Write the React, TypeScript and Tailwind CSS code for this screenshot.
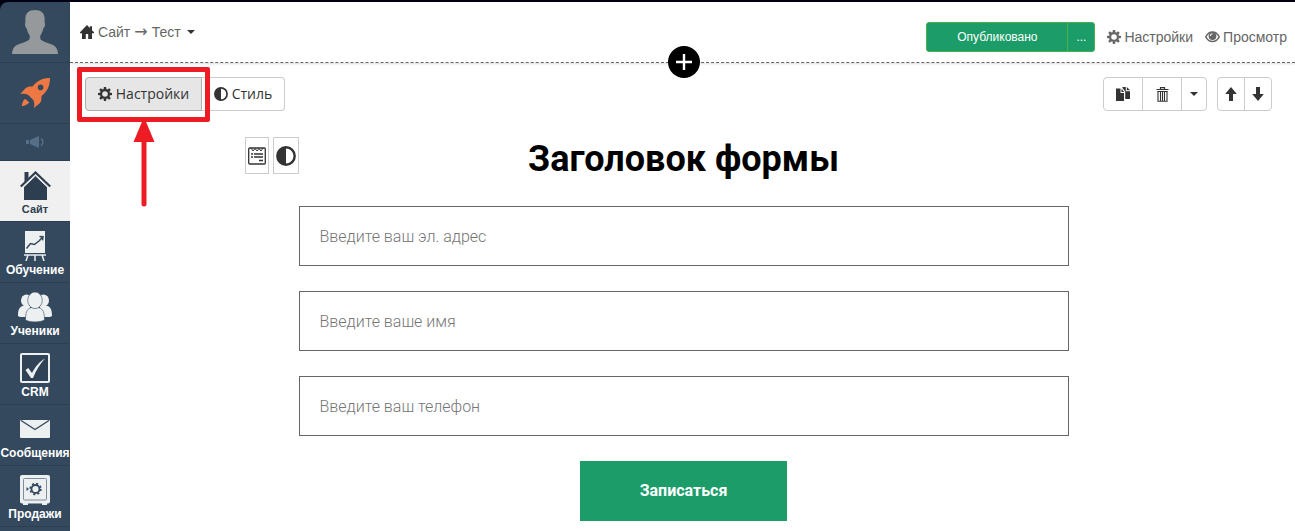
import type { ReactNode } from "react";
import clsx from "clsx";

interface NavItem {
  label: string;
  icon: ReactNode;
  active?: boolean;
}

function CogIcon() {
  return (
    <svg width="14" height="14" viewBox="0 0 14 14" fill="currentColor" aria-hidden="true">
      <circle cx="7" cy="7" r="3.9" fill="none" stroke="currentColor" strokeWidth="2.2" />
      {[0, 45, 90, 135, 180, 225, 270, 315].map((a) => (
        <path key={a} d="M5.500 2.600L5.900 0h2.200l.4 2.600z" transform={`rotate(${a} 7 7)`} />
      ))}
    </svg>
  );
}

function ContrastIcon({ size }: { size: number }) {
  return (
    <svg width={size} height={size} viewBox="0 0 20 20" aria-hidden="true">
      <circle cx="10" cy="10" r="8.7" fill="none" stroke="currentColor" strokeWidth="2.4" />
      <path d="M10 1v18a9 9 0 0 1 0-18z" fill="currentColor" />
    </svg>
  );
}

function HomeIcon() {
  return (
    <svg width="14" height="14" viewBox="0 0 14 14" fill="currentColor" aria-hidden="true">
      <path d="M7 0L-.2 7.500v.700H2V14h3.800V9h2.400v5H12V8.200h2.200v-.7L12 5.200V1.200H9.900v1.900z" />
    </svg>
  );
}

function EyeIcon() {
  return (
    <svg width="15" height="12" viewBox="0 0 15 12" aria-hidden="true">
      <path d="M.8 5.800C2.300 2.800 4.700 1 7.500 1s5.200 1.800 6.700 4.800C12.700 8.800 10.300 10.500 7.500 10.500S2.300 8.800.8 5.800z" fill="none" stroke="currentColor" strokeWidth="1.500" />
      <circle cx="7.500" cy="5" r="3.900" fill="currentColor" />
      <path d="M5.300 5a2.400 2.400 0 0 1 2.200-2.300" fill="none" stroke="#fff" strokeWidth="1.100" />
    </svg>
  );
}

function Caret() {
  return (
    <svg width="8" height="4" viewBox="0 0 8 4" fill="currentColor" aria-hidden="true">
      <path d="M0 0h8L4 4z" />
    </svg>
  );
}

function CopyIcon() {
  return (
    <svg width="15" height="14" viewBox="0 0 15 14" fill="currentColor" aria-hidden="true">
      <path d="M0 1.500h4.500v4.500H8V14H0z" />
      <path d="M5.500 1.700L8.200 5H5.500z" />
      <path d="M6.500 0h3.300v4.300H14V12H9.200V4.500L6.500 1z" />
      <path d="M10.800 0L14 3.300h-3.200z" />
    </svg>
  );
}

function TrashIcon() {
  return (
    <svg width="13" height="15" viewBox="0 0 13 15" aria-hidden="true">
      <path d="M4.500 2V.600h4V2M.500 2.500h12M1.500 4.500h10" fill="none" stroke="currentColor" strokeWidth="1.200" />
      <path d="M2 4v10.300h9V4M4.500 5v9M6.500 5v9M8.500 5v9" fill="none" stroke="currentColor" strokeWidth="1.100" />
    </svg>
  );
}

function ArrowIcon({ down }: { down?: boolean }) {
  return (
    <svg width="12" height="14" viewBox="0 0 12 14" fill="currentColor" className={clsx(down && "rotate-180")} aria-hidden="true">
      <path d="M6 0l5.800 7H8v7H4V7H.200z" />
    </svg>
  );
}

function FormIcon() {
  return (
    <svg width="18" height="18" viewBox="0 0 18 18" fill="none" stroke="currentColor" aria-hidden="true">
      <rect x=".700" y="1" width="16.600" height="16" rx="1" strokeWidth="1.300" />
      <path d="M3 1l2 3 2-2.500L9 4l2-2.500L13 4l2-3" strokeWidth="1" />
      <path d="M3 7h2m1 0h9M3 10h2m1 0h9M11 13.500h4" strokeWidth="1.400" />
    </svg>
  );
}

function AvatarIcon() {
  return (
    <svg width="46" height="44" viewBox="0 0 46 44" fill="#95999c" aria-hidden="true">
      <path d="M23 0c6 0 9.500 3 9.600 8.500.1 1.500-.2 3 .2 4.500.6 2-.3 4.500-1.500 5.500-.6 3-1.900 5.500-3 7v3.200c1.600 3.300 10 4.300 13.700 6.800 3 2 3.700 5 4 8.500H0c.3-3.500 1-6.500 4-8.500 3.700-2.500 12.100-3.500 13.700-6.800v-3.200c-1.100-1.500-2.400-4-3-7-1.200-1-2.100-3.500-1.500-5.500.4-1.500.1-3 .2-4.500C13.500 3 17 0 23 0z" />
    </svg>
  );
}

function RocketIcon() {
  return (
    <svg width="30" height="30" viewBox="0 0 30 30" fill="#ee7844" aria-hidden="true">
      <path
        fillRule="evenodd"
        d="M30 0c-7 0-13 2.500-17.500 8.600C9 8.600 7 9 5.500 10.300L0 16.200c3.500-.6 6-.4 8.300.8l5 5c1.200 2.300 1.300 4.800.7 8l6-5c1.300-1.500 1.500-3.500 1.500-7C27.500 13.500 30 7.500 30 0zM20.600 6.600a2.800 2.800 0 1 1 0 5.600 2.800 2.800 0 0 1 0-5.600z"
      />
      <path d="M5.200 20.800C3 22.800 2 25 1.800 28.200c3-.2 5.500-1.400 7.400-3.600z" />
    </svg>
  );
}

function MegaphoneIcon() {
  return (
    <svg width="18" height="12" viewBox="0 0 18 12" fill="#566f87" aria-hidden="true">
      <path d="M0 4h3v4H0zM4 4l9-4v12L4 8z" />
      <path d="M15 2.500c2.500 1.500 2.500 5.500 0 7" fill="none" stroke="#566f87" strokeWidth="1.500" />
    </svg>
  );
}

function SiteIcon() {
  return (
    <svg width="31" height="29" viewBox="0 0 31 29" fill="#2c3e50" aria-hidden="true">
      <path d="M4.500 1h4v6l-4 4zM15.500 4.500L27 15.500V29H4V15.500z" />
      <path d="M.800 15.500L15.500 1.500l14.700 14" fill="none" stroke="#2c3e50" strokeWidth="2.200" />
      <path d="M3.500 16.200l12-11.400 12 11.400" fill="none" stroke="#f0f0f0" strokeWidth="1" />
    </svg>
  );
}

function TrainingIcon() {
  return (
    <svg width="22" height="30" viewBox="0 0 22 30" aria-hidden="true">
      <path d="M1 0h20v22H1z" fill="#ecf0f1" />
      <path d="M2.500 17.500l4-5 4 1 5-4 3-3.500M15.500 5.500l3.500.2-.5 3.600" fill="none" stroke="#34495e" strokeWidth="1.500" />
      <path d="M0 24h22M4 24l-2 6M11 24v6M18 24l2 6" fill="none" stroke="#ecf0f1" strokeWidth="1.500" />
    </svg>
  );
}

function PupilsIcon() {
  return (
    <svg width="34" height="30" viewBox="0 0 34 30" fill="#ecf0f1" aria-hidden="true">
      <ellipse cx="8.500" cy="8.500" rx="5.500" ry="6" />
      <ellipse cx="25.500" cy="8.500" rx="5.500" ry="6" />
      <path d="M0 24c0-6 1-9.500 6-10.500h6V25H6c-3 0-5 0-6-1zM34 24c0-6-1-9.500-6-10.500h-6V25h6c3 0 5 0 6-1z" />
      <path d="M7.500 28c0-7 1-11 6-12.500h7c5 1.500 6 5.500 6 12.500-4 2.500-15 2.500-19 0z" stroke="#34495e" strokeWidth=".6" />
      <ellipse cx="17" cy="8.300" rx="7.300" ry="8.300" stroke="#34495e" strokeWidth=".6" />
    </svg>
  );
}

function CrmIcon() {
  return (
    <svg width="30" height="30" viewBox="0 0 30 30" aria-hidden="true">
      <rect x="1" y="1" width="28" height="28" rx="1" fill="#2f4256" stroke="#ecf0f1" strokeWidth="2" />
      <path d="M5.500 17l2.800-2 3.700 5C15 14 19.500 8.500 25 5.500 20 11 16 17.500 13 25h-2z" fill="#ecf0f1" />
    </svg>
  );
}

function MailIcon() {
  return (
    <svg width="30" height="18" viewBox="0 0 30 18" aria-hidden="true">
      <rect width="30" height="18" rx="1" fill="#ecf0f1" />
      <path d="M1 .500l14 9 14-9" fill="none" stroke="#34495e" strokeWidth="1.300" />
    </svg>
  );
}

function SafeIcon() {
  return (
    <svg width="30" height="30" viewBox="0 0 30 30" aria-hidden="true">
      <path d="M3 27h5v3H3zM22 27h5v3h-5z" fill="#ecf0f1" />
      <rect width="30" height="28.500" rx="2" fill="#ecf0f1" />
      <rect x="3.500" y="3.500" width="23" height="21.500" rx="1" fill="none" stroke="#7f8c99" strokeWidth="1" />
      <circle cx="15.500" cy="14" r="4" fill="none" stroke="#34495e" strokeWidth="1.800" />
      <circle cx="15.500" cy="14" r="5.400" fill="none" stroke="#34495e" strokeWidth="1.600" strokeDasharray="2.120 2.120" />
      <path d="M6.500 12l2.500 2-2.500 2z" fill="#34495e" />
    </svg>
  );
}

const navItems: NavItem[] = [
  { label: "Сайт", icon: <SiteIcon />, active: true },
  { label: "Обучение", icon: <TrainingIcon /> },
  { label: "Ученики", icon: <PupilsIcon /> },
  { label: "CRM", icon: <CrmIcon /> },
  { label: "Сообщения", icon: <MailIcon /> },
  { label: "Продажи", icon: <SafeIcon /> },
];

const fields = [
  { name: "email", type: "email", placeholder: "Введите ваш эл. адрес" },
  { name: "name", type: "text", placeholder: "Введите ваше имя" },
  { name: "phone", type: "tel", placeholder: "Введите ваш телефон" },
];

function Sidebar() {
  return (
    <nav className="w-[70px] shrink-0 overflow-hidden rounded-tl-lg bg-[#34495e] text-xs font-bold text-white">
      <a href="#profile" aria-label="Профиль" className="flex h-[61px] justify-center border-b border-[#2c3e50] pt-2">
        <AvatarIcon />
      </a>
      <a href="#start" aria-label="Старт" className="flex h-[61px] items-center justify-center border-b border-[#2c3e50]">
        <RocketIcon />
      </a>
      <a href="#news" aria-label="Новости" className="flex h-[37px] items-center justify-center border-b border-[#2c3e50]">
        <MegaphoneIcon />
      </a>
      {navItems.map((item) => (
        <a
          key={item.label}
          href="#"
          className={clsx(
            "flex h-[61px] flex-col items-center border-b border-[#2c3e50] pt-2",
            item.active && "bg-[#f0f0f0] text-[11px] text-[#2c3e50]"
          )}
        >
          <span className="flex h-8 items-center">{item.icon}</span>
          <span className="leading-4">{item.label}</span>
        </a>
      ))}
      <div className="h-1" />
    </nav>
  );
}

function Header() {
  return (
    <header className="relative flex h-[61px] items-start justify-between border-b border-dashed border-[#666] pt-5 pr-2 pl-[10px] text-sm text-[#666] shadow-sm">
      <div className="flex items-center gap-1">
        <span className="text-[#333]">
          <HomeIcon />
        </span>
        <a href="#site">Сайт</a>
        <span className="font-['DejaVu_Sans',sans-serif] text-base leading-5">→</span>
        <button className="flex items-center gap-[6px]">
          Тест
          <span className="text-[#333]">
            <Caret />
          </span>
        </button>
      </div>
      <div className="flex items-center gap-3">
        <div className="flex h-[30px] rounded-[3px] border border-[#4cae4c] bg-[#1b9c68] text-xs text-white">
          <button className="w-[140px]">Опубликовано</button>
          <button className="w-[27px] border-l border-[#4cae4c]">...</button>
        </div>
        <a href="#settings" className="flex items-center gap-[3px]">
          <CogIcon />
          Настройки
        </a>
        <a href="#preview" className="flex items-center gap-[3px]">
          <EyeIcon />
          Просмотр
        </a>
      </div>
      <button
        aria-label="Добавить блок"
        className="absolute top-11 left-1/2 ml-[-15px] flex size-8 items-center justify-center rounded-full bg-black text-white"
      >
        <svg width="16" height="16" viewBox="0 0 16 16" stroke="currentColor" strokeWidth="2.400" aria-hidden="true">
          <path d="M8 0v16M0 8h16" />
        </svg>
      </button>
    </header>
  );
}

// red frame and arrow over the settings button
function Highlight() {
  return (
    <div className="pointer-events-none absolute -top-[10px] -right-2 -bottom-[11px] -left-2 rounded-[2px] border-[5px] border-[#ed1c24]">
      <svg width="20" height="88" viewBox="0 0 20 88" className="absolute top-full left-1/2 -ml-[10px] overflow-visible" fill="#ed1c24" aria-hidden="true">
        <path d="M10 0l10.500 25H-.500z" />
        <path d="M10 20v67" stroke="#ed1c24" strokeWidth="5" strokeLinecap="round" />
      </svg>
    </div>
  );
}

function Toolbar() {
  return (
    <div className="flex justify-between pr-[23px] pl-[15px] text-[#333]">
      <div className="flex h-[34px] font-['Open_Sans',sans-serif] text-sm">
        <div className="relative flex">
          <button className="flex w-[117px] items-center justify-center gap-1 rounded-l border border-[#adadad] bg-[#e6e6e6]">
            <CogIcon />
            Настройки
          </button>
          <Highlight />
        </div>
        <button className="flex w-[83px] items-center justify-center gap-1 rounded-r border border-l-0 border-[#ccc]">
          <ContrastIcon size={14} />
          Стиль
        </button>
      </div>
      <div className="flex h-[34px] gap-[10px]">
        <div className="flex divide-x divide-[#ccc] rounded border border-[#ccc]">
          <button aria-label="Копировать" className="flex w-[39px] items-center justify-center">
            <CopyIcon />
          </button>
          <button aria-label="Удалить" className="flex w-[39px] items-center justify-center">
            <TrashIcon />
          </button>
          <button aria-label="Ещё" className="flex w-6 items-center justify-center">
            <Caret />
          </button>
        </div>
        <div className="flex divide-x divide-[#ccc] rounded border border-[#ccc]">
          <button aria-label="Вверх" className="flex w-[27px] items-center justify-center">
            <ArrowIcon />
          </button>
          <button aria-label="Вниз" className="flex w-[26px] items-center justify-center">
            <ArrowIcon down />
          </button>
        </div>
      </div>
    </div>
  );
}

function FormBlock() {
  return (
    <div className="mt-[26px] flex justify-center pl-[2px] font-[Roboto,sans-serif]">
      <div className="flex h-[37px] w-[54px] shrink-0 gap-1 text-[#333]">
        <button aria-label="Поля формы" className="flex w-6 items-center justify-center border border-[#ccc]">
          <FormIcon />
        </button>
        <button aria-label="Оформление" className="flex w-[26px] items-center justify-center border border-[#ccc]">
          <ContrastIcon size={20} />
        </button>
      </div>
      <form className="flex w-full max-w-[770px] flex-col items-center gap-[25px]" onSubmit={(e) => e.preventDefault()}>
        <h1 className="text-4xl leading-[44px] font-bold text-black">Заголовок формы</h1>
        {fields.map((f) => (
          <input
            key={f.name}
            name={f.name}
            type={f.type}
            placeholder={f.placeholder}
            aria-label={f.placeholder}
            className="h-[60px] w-full border border-[#666] px-5 text-base font-light placeholder:text-[#757575]"
          />
        ))}
        <button className="h-[60px] w-[207px] bg-[#1b9c68] text-base font-bold text-white">Записаться</button>
      </form>
      <div className="w-[54px] shrink-0" />
    </div>
  );
}

export default function App() {
  return (
    <div className="min-h-screen bg-[#020013] pt-[2px] font-['Liberation_Sans',Arial,sans-serif]">
      <div className="flex">
        <Sidebar />
        <main className="min-w-0 flex-1 bg-white">
          <Header />
          <section className="pt-[14px]">
            <Toolbar />
            <FormBlock />
          </section>
        </main>
      </div>
    </div>
  );
}
